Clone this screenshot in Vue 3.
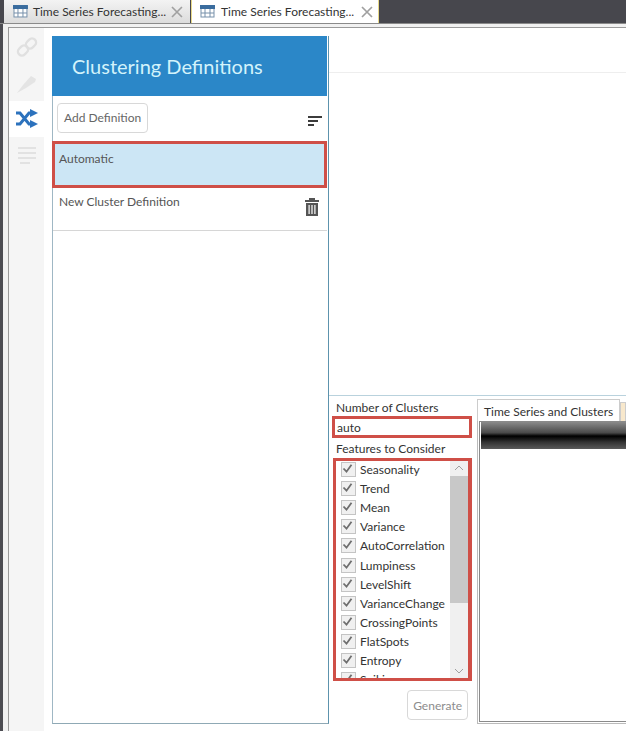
<script setup>
const features = ['Seasonality','Trend','Mean','Variance','AutoCorrelation','Lumpiness','LevelShift','VarianceChange','CrossingPoints','FlatSpots','Entropy','Spikiness']
</script>

<template>
  <div class="app">
    <div class="tabbar">
      <div v-for="n in 2" :key="n" class="doc-tab" :class="{ active: n === 2 }">
        <svg class="tab-icon" width="15" height="13" viewBox="0 0 15 13">
          <rect x="1" y="1" width="13" height="11" fill="#fff" stroke="#7690aa" />
          <rect x="0" y="0" width="15" height="4" fill="#3a6c9e" />
          <path d="M5 4v8M10 4v8M1 8h13" stroke="#7690aa" />
        </svg>
        <span class="tab-title">Time Series Forecasting...</span>
        <svg class="tab-close" width="12" height="12" viewBox="0 0 12 12">
          <path d="M1 1l10 10M11 1L1 11" stroke="#a0a0a0" stroke-width="1.7" />
        </svg>
      </div>
    </div>
    <div class="work">
      <div class="frame">
        <nav class="rail">
          <div class="rail-item">
            <svg width="22" height="22" viewBox="0 0 22 22" fill="none" stroke="#e0e0e0" stroke-width="2.4">
              <rect x="11" y="2" width="8" height="11" rx="4" transform="rotate(45 15 7.5)" />
              <rect x="3" y="9" width="8" height="11" rx="4" transform="rotate(45 7 14.5)" />
            </svg>
          </div>
          <div class="rail-item">
            <svg width="22" height="22" viewBox="0 0 22 22" fill="#e4e4e4">
              <path d="M1 21l6-8 8-9 5 3-1 3-9 6z" />
            </svg>
          </div>
          <div class="rail-item current">
            <svg width="24" height="20" viewBox="0 0 24 20" fill="none" stroke="#2c72bd" stroke-width="3">
              <path d="M1 4h4l9 11h3M1 15h4l9-11h3" />
              <path d="M15 0l8 4-8 4zM15 11l8 4-8 4z" fill="#2c72bd" stroke="none" />
            </svg>
          </div>
          <div class="rail-item">
            <svg width="20" height="20" viewBox="0 0 20 20" stroke="#e2e2e2" stroke-width="2.2">
              <path d="M1 3h18M1 8h18M1 13h18M3 18h10" />
            </svg>
          </div>
        </nav>

        <aside class="defs">
          <h1 class="defs-title">Clustering Definitions</h1>
          <div class="defs-toolbar">
            <button class="btn add">Add Definition</button>
            <svg class="sort" width="14" height="10" viewBox="0 0 14 10" fill="#3c3c3c">
              <rect x="0" y="0" width="14" height="2" />
              <rect x="0" y="4" width="10" height="2" />
              <rect x="0" y="8" width="6" height="2" />
            </svg>
          </div>
          <div class="def-row selected"><span>Automatic</span></div>
          <div class="def-row plain">
            <span>New Cluster Definition</span>
            <svg width="14" height="18" viewBox="0 0 14 18" fill="#555">
              <rect x="0" y="2" width="14" height="2" />
              <rect x="4" y="0" width="6" height="2" />
              <path d="M1 5h12v13H1zM3.5 7v9h1.2V7zM6.4 7v9h1.2V7zM9.3 7v9h1.2V7z" fill-rule="evenodd" />
            </svg>
          </div>
        </aside>

        <main class="detail">
          <div class="detail-head"></div>
          <div class="detail-body">
            <section class="form">
              <label class="field-label">Number of Clusters</label>
              <div class="field-input">auto</div>
              <label class="field-label second">Features to Consider</label>
              <div class="features">
                <div class="feature-list">
                  <div v-for="f in features" :key="f" class="feature">
                    <span class="check">
                      <svg width="13" height="13" viewBox="0 0 13 13" fill="none">
                        <path d="M2.5 6.5l3 3.2 5-7" stroke="#6e6e6e" stroke-width="1.8" />
                      </svg>
                    </span>
                    <span>{{ f }}</span>
                  </div>
                </div>
                <div class="scroll">
                  <svg width="10" height="6" viewBox="0 0 10 6" fill="none"><path d="M1 5l4-4 4 4" stroke="#a0a0a0" /></svg>
                  <div class="thumb"></div>
                  <svg width="10" height="6" viewBox="0 0 10 6" fill="none"><path d="M1 1l4 4 4-4" stroke="#a0a0a0" /></svg>
                </div>
              </div>
              <div class="form-actions"><button class="btn faint">Generate</button></div>
            </section>
            <section class="results">
              <div class="result-tabs">
                <div class="result-tab">Time Series and Clusters</div>
                <div class="result-tab other"></div>
              </div>
              <div class="result-pane">
                <div class="result-inner"><div class="band"></div></div>
              </div>
            </section>
          </div>
        </main>
      </div>
    </div>
  </div>
</template>

<style scoped>
.app {
  width: 626px;
  height: 731px;
  overflow: hidden;
  background: #fff;
  font-family: "Lato", "Open Sans", sans-serif;
  font-size: 12px;
  color: #444;
  display: flex;
  flex-direction: column;
}
.tabbar {
  height: 23px;
  flex: none;
  display: flex;
  gap: 1px;
  padding-left: 4px;
  background: #47474d;
  border-bottom: 1px solid #8a8a8a;
}
.doc-tab {
  width: 186px;
  display: flex;
  align-items: center;
  padding: 0 7px 0 9px;
  gap: 5px;
  background: linear-gradient(#f3f3f3, #dcdcdc);
  color: #333;
  box-sizing: border-box;
}
.doc-tab.active {
  background: #fff;
  width: 188px;
  padding: 0 5px 0 8px;
  gap: 6px;
  border-right: 1px solid #e8d98a;
  border-left: 1px solid #e8d98a;
}
.tab-title { flex: 1; white-space: nowrap; }
.work {
  flex: 1;
  min-height: 0;
  display: flex;
  background: #f1f1f1;
  border-left: 3px solid #4c4c52;
  padding: 3px 0 0 5px;
}
.frame {
  flex: 1;
  min-width: 0;
  display: flex;
  background: #fff;
  border: 1px solid #9a9a9a;
  border-right: 0;
  border-bottom: 0;
}
.rail {
  width: 35px;
  flex: none;
  background: #f5f5f5;
  padding-top: 1px;
  box-sizing: border-box;
}
.rail-item {
  height: 36px;
  display: flex;
  align-items: center;
  justify-content: center;
}
.rail-item.current { background: #fff; }
.defs {
  width: 277px;
  flex: none;
  margin: 8px 0 7px 8px;
  padding-right: 1px;
  border-left: 1px solid #9fb7c4;
  border-right: 1px solid #5d93ad;
  border-bottom: 1px solid #8fa9b5;
  box-sizing: border-box;
}
.defs-title {
  margin: 0 0 0 -1px;
  height: 60px;
  line-height: 60px;
  padding-left: 20px;
  background: #2b87c8;
  color: #d3f3fb;
  font-size: 20px;
  font-weight: 400;
}
.defs-toolbar {
  height: 45px;
  display: flex;
  align-items: center;
  justify-content: space-between;
  padding: 0 5px 0 4px;
}
.sort { margin-top: 5px; }
.btn {
  height: 30px;
  padding: 0 6px;
  border: 1px solid #d8d8d8;
  border-radius: 4px;
  background: #fff;
  font: inherit;
  color: #666;
}
.btn.add { margin-bottom: 2px; }
.btn.faint { color: #8c8c8c; padding: 0 5px; }
.def-row {
  box-sizing: border-box;
  color: #555;
}
.def-row.selected {
  height: 47px;
  margin-left: -1px;
  background: #cce6f5;
  border: 3px solid #cf4f47;
  padding: 7px 4px;
}
.def-row.plain {
  height: 43px;
  padding: 6px 8px 0 6px;
  display: flex;
  justify-content: space-between;
  border-bottom: 1px solid #d6d6d6;
}
.def-row.plain svg { margin-top: 4px; }
.detail {
  flex: 1;
  min-width: 0;
  display: flex;
  flex-direction: column;
  padding-top: 8px;
}
.detail-head {
  height: 36px;
  border-bottom: 1px solid #eee;
}
.detail-body {
  margin-top: 322px;
  flex: 1;
  min-height: 0;
  display: flex;
  border-top: 1px solid #b9d2dd;
}
.form {
  width: 142px;
  flex: none;
  margin-left: 3px;
  color: #333;
}
.field-label {
  display: block;
  height: 20px;
  line-height: 23px;
  padding-left: 4px;
}
.field-input {
  height: 22px;
  line-height: 17px;
  padding-left: 2px;
  border: 3px solid #cf4f47;
  box-sizing: border-box;
  width: 140px;
}
.field-label.second { line-height: 21px; }
.features {
  width: 139px;
  height: 223px;
  margin-left: 1px;
  border: 3px solid #cf4f47;
  border-right-width: 4px;
  box-sizing: border-box;
  display: flex;
  overflow: hidden;
}
.feature-list {
  flex: 1;
  padding-left: 5px;
  margin-top: -1px;
}
.feature {
  height: 19.1px;
  display: flex;
  align-items: center;
  gap: 4px;
}
.check {
  width: 13px;
  height: 13px;
  border: 1px solid #c4c4c4;
  background: #f0f0f0;
  flex: none;
  display: block;
}
.check svg { display: block; margin: -1px; }
.scroll {
  width: 18px;
  flex: none;
  background: #f0f0f0;
  display: flex;
  flex-direction: column;
  align-items: center;
  justify-content: space-between;
  padding: 4px 0;
  box-sizing: border-box;
  position: relative;
}
.thumb {
  position: absolute;
  top: 15px;
  left: 0;
  width: 18px;
  height: 127px;
  background: #c8c8c8;
}
.form-actions {
  display: flex;
  justify-content: flex-end;
  padding: 9px 6px 0 0;
}
.results {
  flex: 1;
  min-width: 0;
  margin: 3px 0 7px 3px;
  display: flex;
  flex-direction: column;
}
.result-tabs { display: flex; height: 22px; flex: none; }
.result-tab {
  padding: 4px 6px 0;
  width: 143px;
  flex: none;
  box-sizing: border-box;
  border: 1px solid #ccc;
  border-bottom: 0;
  color: #333;
  white-space: nowrap;
}
.result-tab.other {
  flex: 1;
  width: auto;
  padding: 0;
  margin-top: 3px;
  background: #f8e8cc;
}
.result-pane {
  flex: 1;
  min-height: 0;
  display: flex;
  border-left: 1px solid #bbb;
  border-bottom: 1px solid #bbb;
  padding: 0 0 1px 1px;
}
.result-inner {
  flex: 1;
  min-width: 0;
  border: 1px solid #8a8a8a;
  border-right: 0;
  padding-left: 1px;
}
.band {
  height: 27px;
  background: linear-gradient(#8a8a8a, #4a4a4a 40%, #000 52%, #333 75%, #5a5a5a);
}
</style>
